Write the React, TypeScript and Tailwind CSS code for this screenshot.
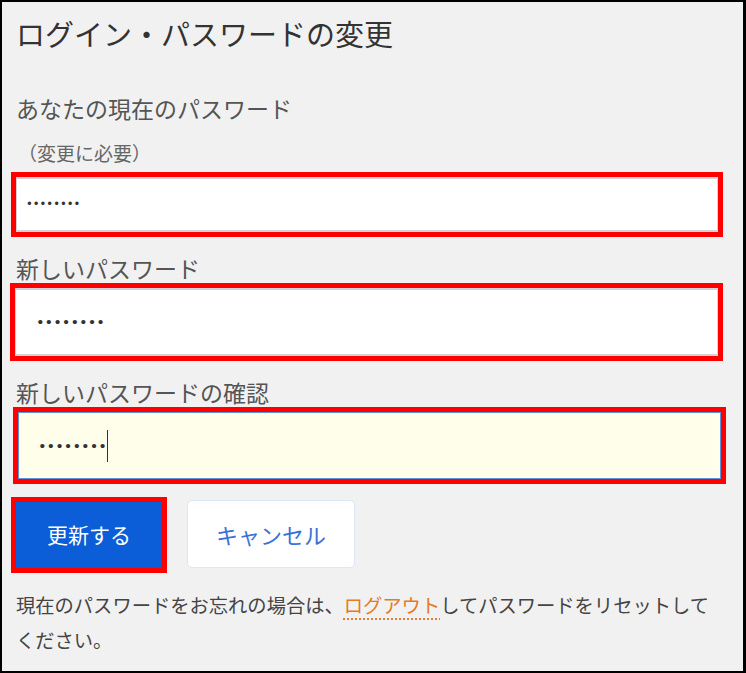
import React from 'react';

const App: React.FC = () => {
    return (
        <div className="w-[746px] h-[673px] border-2 border-r-[3px] border-black bg-[#f1f1f1] pl-[14px] font-['Noto_Sans_CJK_JP',sans-serif] overflow-hidden">
            {/* タイトル */}
            <h1 className="h-[62px] leading-[62px] text-[29px] text-[#333]">ログイン・パスワードの変更</h1>

            {/* 現在のパスワード */}
            <div className="mt-[29px] h-[30px] leading-[30px] text-[23px] text-[#555]">あなたの現在のパスワード</div>
            <div className="mt-[18px] ml-[2px] h-[24px] leading-[24px] text-[19px] text-[#666]">（変更に必要）</div>
            <div className="mt-[7px] -ml-[5px] w-[712px] h-[65px] border-[5px] border-[#ff0000]">
                <div className="h-full bg-white border-x border-y-2 border-[#cfd3d7] flex items-center pl-[9px]">
                    <span className="font-['DejaVu_Sans',sans-serif] text-[11.5px] text-[#333]">••••••••</span>
                </div>
            </div>

            {/* 新しいパスワード */}
            <div className="mt-[16px] h-[30px] leading-[30px] text-[23px] text-[#555]">新しいパスワード</div>
            <div className="-ml-[6px] w-[713px] h-[78px] border-[5px] border-[#ff0000]">
                <div className="h-full bg-white border-x border-y-2 border-[#cfd3d7] flex items-center pl-[20px]">
                    <span className="font-['DejaVu_Sans',sans-serif] text-[14.6px] text-[#333]">••••••••</span>
                </div>
            </div>

            {/* 確認 */}
            <div className="mt-[16px] h-[30px] leading-[30px] text-[23px] text-[#555]">新しいパスワードの確認</div>
            <div className="-ml-[3px] w-[713px] h-[77px] border-[5px] border-[#ff0000]">
                <div className="h-full bg-[#fffeea] border border-[#5b93dc] shadow-[inset_0_0_0_1px_#ffffff] flex items-center pl-[19px]">
                    <span className="font-['DejaVu_Sans',sans-serif] text-[14.6px] text-[#333]">••••••••</span>
                    <span className="w-px h-[32px] bg-[#333]" />
                </div>
            </div>

            {/* ボタン */}
            <div className="mt-[13px] -ml-[5px] flex items-start">
                <div className="w-[156px] h-[76px] border-[5px] border-[#ff0000]">
                    <button className="w-full h-full bg-[#0b5ed7] text-white text-[21px]">更新する</button>
                </div>
                <button className="ml-[20px] mt-[3px] w-[168px] h-[68px] bg-white border border-[#dce6f8] rounded-[5px] text-[22px] text-[#3a72d8]">
                    キャンセル
                </button>
            </div>

            {/* 注意書き */}
            <p className="mt-[15px] text-[19.3px] leading-[35px] text-[#444]">
                <span>現在のパスワードをお忘れの場合は、</span>
                <a className="text-[#e57a26] underline decoration-dotted decoration-[#e57a26] underline-offset-[6px]">ログアウト</a>
                <span>してパスワードをリセットして</span>
                <br />
                <span>ください。</span>
            </p>
        </div>
    );
};

export default App;
